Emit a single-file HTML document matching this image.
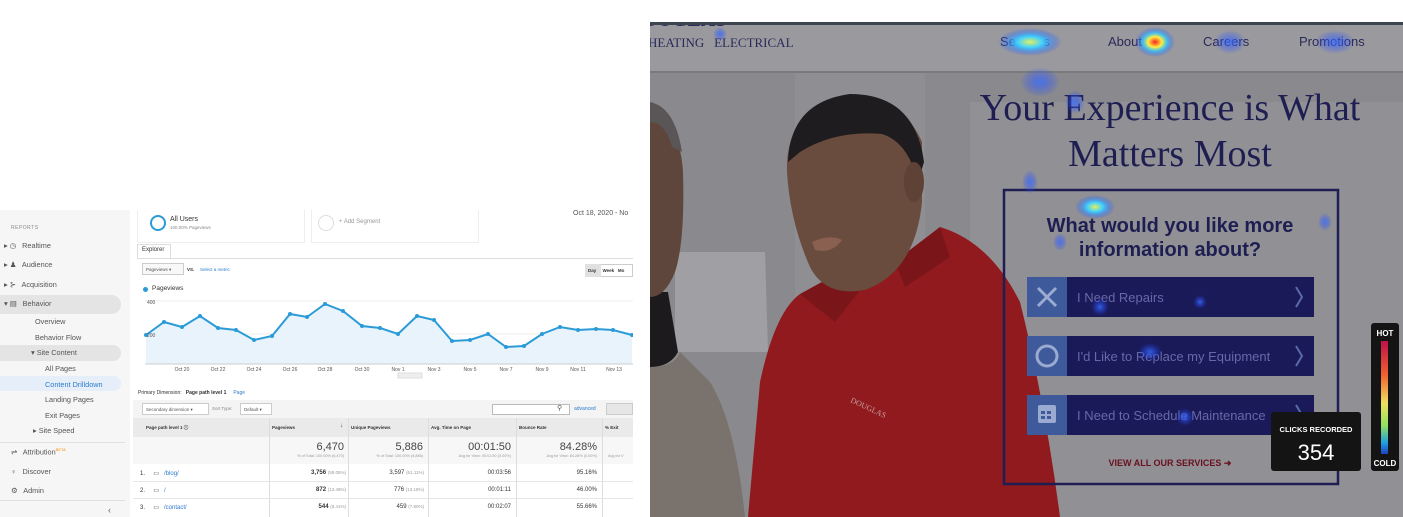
<!DOCTYPE html>
<html><head><meta charset="utf-8"><style>
*{margin:0;padding:0;box-sizing:border-box}
body{width:1403px;height:517px;background:#fff;position:relative;overflow:hidden;font-family:"Liberation Sans",sans-serif}
.a{position:absolute;white-space:nowrap}
.sb{position:absolute;left:0;top:210px;width:130px;height:307px;background:#f6f6f6}
.sb .i{position:absolute;left:30px;font-size:7.3px;color:#555}
.t{font-size:6px;color:#333}
.g{color:#999}
.l{color:#2b7bcc}
</style></head><body>
<div class="sb">
 <div class="a" style="left:11px;top:15px;font-size:5px;color:#888;letter-spacing:.5px">REPORTS</div>
 <div class="a" style="left:0;top:85px;width:121px;height:19px;background:#e4e4e4;border-radius:0 10px 10px 0"></div>
 <div class="a" style="left:0;top:135px;width:121px;height:16px;background:#e4e4e4;border-radius:0 8px 8px 0"></div>
 <div class="a" style="left:0;top:166px;width:121px;height:15px;background:#e6eef9;border-radius:0 8px 8px 0"></div>
 <div class="i a" style="left:4px;top:31px">▸ ◷&nbsp;&nbsp; Realtime</div>
 <div class="i a" style="left:4px;top:50px">▸ ♟&nbsp;&nbsp; Audience</div>
 <div class="i a" style="left:4px;top:70px">▸ ⊱&nbsp;&nbsp; Acquisition</div>
 <div class="i a" style="left:4px;top:89px">▾ ▤&nbsp;&nbsp; Behavior</div>
 <div class="i" style="left:35px;top:107px">Overview</div>
 <div class="i" style="left:35px;top:123px">Behavior Flow</div>
 <div class="i" style="left:31px;top:138px">▾ Site Content</div>
 <div class="i" style="left:45px;top:154px">All Pages</div>
 <div class="i" style="left:45px;top:170px;color:#2b7bcc">Content Drilldown</div>
 <div class="i" style="left:45px;top:185px">Landing Pages</div>
 <div class="i" style="left:45px;top:201px">Exit Pages</div>
 <div class="i" style="left:33px;top:216px">▸ Site Speed</div>
 <div class="a" style="left:0;top:232px;width:125px;border-top:1px solid #e0e0e0"></div>
 <div class="i a" style="left:11px;top:237px">⇌&nbsp;&nbsp; Attribution<sup style="color:#f80;font-size:4px">BETA</sup></div>
 <div class="i a" style="left:11px;top:257px">♀&nbsp;&nbsp; Discover</div>
 <div class="i a" style="left:11px;top:276px">⚙&nbsp;&nbsp; Admin</div>
 <div class="a" style="left:0;top:290px;width:125px;border-top:1px solid #e0e0e0"></div>
 <div class="a" style="left:108px;top:295px;font-size:9px;color:#666">‹</div>
</div>
<div class="a" style="left:137px;top:210px;width:168px;height:33px;border:1px solid #eee;border-top:none"></div>
<div class="a" style="left:150px;top:215px;width:16px;height:16px;border:2px solid #2b9bd8;border-radius:50%"></div>
<div class="a" style="left:170px;top:216px;font-size:7px;color:#333">All Users</div>
<div class="a" style="left:170px;top:225px;font-size:4.5px;color:#888">100.00% Pageviews</div>
<div class="a" style="left:311px;top:210px;width:168px;height:33px;border:1px solid #eee;border-top:none"></div>
<div class="a" style="left:318px;top:215px;width:16px;height:16px;border:1px solid #ddd;border-radius:50%"></div>
<div class="a" style="left:339px;top:219px;font-size:6px;color:#999">+ Add Segment</div>
<div class="a" style="left:573px;top:210px;font-size:7px;color:#555">Oct 18, 2020 - No</div>
<div class="a" style="left:137px;top:244px;width:34px;height:15px;border:1px solid #ddd;border-bottom:none;background:#fff"></div>
<div class="a" style="left:142px;top:247px;font-size:6px;color:#333">Explorer</div>
<div class="a" style="left:137px;top:258px;width:496px;border-top:1px solid #ddd"></div>
<div class="a" style="left:142px;top:263px;width:42px;height:12px;border:1px solid #ccc;background:#f8f8f8;font-size:4.5px;color:#555;padding:3px">Pageviews ▾</div>
<div class="a" style="left:187px;top:267px;font-size:4.5px;color:#333;font-weight:bold">VS.</div>
<div class="a l" style="left:200px;top:267px;font-size:4.5px">Select a metric</div>
<div class="a" style="left:585px;top:264px;width:48px;height:13px;border:1px solid #ccc;background:#fff"></div>
<div class="a" style="left:585px;top:264px;width:16px;height:13px;background:#e0e0e0"></div>
<div class="a" style="left:588px;top:268px;font-size:4.5px;color:#333;font-weight:bold">Day&nbsp;&nbsp;&nbsp;&nbsp; Week&nbsp;&nbsp; Mo</div>
<div class="a" style="left:143px;top:287px;width:5px;height:5px;border-radius:50%;background:#2b9bd8"></div>
<div class="a" style="left:152px;top:285px;font-size:6.5px;color:#333">Pageviews</div>
<svg class="a" style="left:137px;top:295px" width="496" height="85">
 <line x1="8" y1="6" x2="496" y2="6" stroke="#eee"/><line x1="8" y1="39" x2="496" y2="39" stroke="#eee"/>
 <polygon fill="#e8f3fb" points="9,40 27,27 45,32 63,21 81,33 99,35 117,45 135,41 153,19 170,22 188,9 206,16 225,31 243,33 261,39 280,21 297,25 315,46 333,45 351,39 369,52 387,51 405,39 423,32 441,35 459,34 476,35 495,40 495,69 9,69"/>
 <polyline fill="none" stroke="#2b9bd8" stroke-width="2" points="9,40 27,27 45,32 63,21 81,33 99,35 117,45 135,41 153,19 170,22 188,9 206,16 225,31 243,33 261,39 280,21 297,25 315,46 333,45 351,39 369,52 387,51 405,39 423,32 441,35 459,34 476,35 495,40"/>
 <g fill="#2b9bd8"><circle cx="9" cy="40" r="2"/><circle cx="27" cy="27" r="2"/><circle cx="45" cy="32" r="2"/><circle cx="63" cy="21" r="2"/><circle cx="81" cy="33" r="2"/><circle cx="99" cy="35" r="2"/><circle cx="117" cy="45" r="2"/><circle cx="135" cy="41" r="2"/><circle cx="153" cy="19" r="2"/><circle cx="170" cy="22" r="2"/><circle cx="188" cy="9" r="2"/><circle cx="206" cy="16" r="2"/><circle cx="225" cy="31" r="2"/><circle cx="243" cy="33" r="2"/><circle cx="261" cy="39" r="2"/><circle cx="280" cy="21" r="2"/><circle cx="297" cy="25" r="2"/><circle cx="315" cy="46" r="2"/><circle cx="333" cy="45" r="2"/><circle cx="351" cy="39" r="2"/><circle cx="369" cy="52" r="2"/><circle cx="387" cy="51" r="2"/><circle cx="405" cy="39" r="2"/><circle cx="423" cy="32" r="2"/><circle cx="441" cy="35" r="2"/><circle cx="459" cy="34" r="2"/><circle cx="476" cy="35" r="2"/><circle cx="495" cy="40" r="2"/></g>
 <line x1="8" y1="69" x2="496" y2="69" stroke="#ccc"/>
 <text x="10" y="9" font-size="5" fill="#555" font-family="Liberation Sans">400</text>
 <text x="10" y="42" font-size="5" fill="#555" font-family="Liberation Sans">200</text>
 <g font-size="5" fill="#555" font-family="Liberation Sans" text-anchor="middle"><text x="45" y="76">Oct 20</text><text x="81" y="76">Oct 22</text><text x="117" y="76">Oct 24</text><text x="153" y="76">Oct 26</text><text x="188" y="76">Oct 28</text><text x="225" y="76">Oct 30</text><text x="261" y="76">Nov 1</text><text x="297" y="76">Nov 3</text><text x="333" y="76">Nov 5</text><text x="369" y="76">Nov 7</text><text x="405" y="76">Nov 9</text><text x="441" y="76">Nov 11</text><text x="477" y="76">Nov 13</text></g>
 <rect x="261" y="78" width="24" height="5" fill="#eee" stroke="#ddd"/>
</svg>
<div class="a" style="left:138px;top:390px;font-size:5px;color:#333">Primary Dimension:&nbsp;&nbsp; <b>Page path level 1</b>&nbsp;&nbsp;&nbsp;&nbsp; <span class="l">Page</span></div>
<div class="a" style="left:133px;top:400px;width:500px;height:18px;background:#f4f4f4"></div>
<div class="a" style="left:142px;top:403px;width:67px;height:12px;border:1px solid #ccc;background:#fff;font-size:4.5px;color:#555;padding:3px">Secondary dimension ▾</div>
<div class="a" style="left:212px;top:406px;font-size:4.5px;color:#888">Sort Type:</div>
<div class="a" style="left:240px;top:403px;width:32px;height:12px;border:1px solid #ccc;background:#fff;font-size:4.5px;color:#555;padding:3px">Default ▾</div>
<div class="a" style="left:492px;top:404px;width:78px;height:11px;border:1px solid #bbb;background:#fff"></div>
<div class="a" style="left:557px;top:404px;font-size:7px;color:#555">⚲</div>
<div class="a l" style="left:574px;top:406px;font-size:5px">advanced</div>
<div class="a" style="left:606px;top:403px;width:27px;height:12px;border:1px solid #ccc;background:#e6e6e6"></div>
<div class="a" style="left:133px;top:418px;width:500px;height:19px;background:#eaeaea"></div>
<div class="a" style="left:133px;top:437px;width:500px;height:27px;background:#f7f7f7"></div>
<div class="a" style="left:269px;top:418px;height:99px;border-left:1px solid #ddd"></div>
<div class="a" style="left:348px;top:418px;height:99px;border-left:1px solid #ddd"></div>
<div class="a" style="left:428px;top:418px;height:99px;border-left:1px solid #ddd"></div>
<div class="a" style="left:516px;top:418px;height:99px;border-left:1px solid #ddd"></div>
<div class="a" style="left:602px;top:418px;height:99px;border-left:1px solid #ddd"></div>
<div class="a" style="left:133px;top:481px;width:500px;border-top:1px solid #e6e6e6"></div>
<div class="a" style="left:133px;top:498px;width:500px;border-top:1px solid #e6e6e6"></div>
<div class="a t" style="left:146px;top:425px;font-size:4.5px;font-weight:bold">Page path level 1 ⓘ</div>
<div class="a t" style="left:272px;top:425px;font-size:4.5px;font-weight:bold">Pageviews</div>
<div class="a t" style="left:340px;top:423px">↓</div>
<div class="a t" style="left:351px;top:425px;font-size:4.5px;font-weight:bold">Unique Pageviews</div>
<div class="a t" style="left:431px;top:425px;font-size:4.5px;font-weight:bold">Avg. Time on Page</div>
<div class="a t" style="left:519px;top:425px;font-size:4.5px;font-weight:bold">Bounce Rate</div>
<div class="a t" style="left:605px;top:425px;font-size:4.5px;font-weight:bold">% Exit</div>
<div class="a" style="left:269px;width:75px;top:441px;text-align:right;font-size:11px;color:#444">6,470</div>
<div class="a" style="left:348px;width:75px;top:441px;text-align:right;font-size:11px;color:#444">5,886</div>
<div class="a" style="left:428px;width:83px;top:441px;text-align:right;font-size:11px;color:#444">00:01:50</div>
<div class="a" style="left:516px;width:81px;top:441px;text-align:right;font-size:11px;color:#444">84.28%</div>
<div class="a g" style="left:269px;width:75px;top:454px;text-align:right;font-size:3.8px">% of Total: 100.00% (6,470)</div>
<div class="a g" style="left:348px;width:75px;top:454px;text-align:right;font-size:3.8px">% of Total: 100.00% (5,886)</div>
<div class="a g" style="left:428px;width:83px;top:454px;text-align:right;font-size:3.8px">Avg for View: 00:01:50 (0.00%)</div>
<div class="a g" style="left:516px;width:81px;top:454px;text-align:right;font-size:3.8px">Avg for View: 84.28% (0.00%)</div>
<div class="a g" style="left:608px;top:454px;font-size:3.8px">Avg for V</div>
<div class="a t" style="left:140px;top:470px">1.&nbsp;&nbsp;&nbsp;&nbsp; ▭&nbsp;&nbsp; <span class="l">/blog/</span></div>
<div class="a t" style="left:140px;top:487px">2.&nbsp;&nbsp;&nbsp;&nbsp; ▭&nbsp;&nbsp; <span class="l">/</span></div>
<div class="a t" style="left:140px;top:504px">3.&nbsp;&nbsp;&nbsp;&nbsp; ▭&nbsp;&nbsp; <span class="l">/contact/</span></div>
<div class="a t" style="left:269px;width:77px;text-align:right;top:470px"><b>3,756</b> <span class="g" style="font-size:4.5px">(58.05%)</span></div>
<div class="a t" style="left:269px;width:77px;text-align:right;top:487px"><b>872</b> <span class="g" style="font-size:4.5px">(13.48%)</span></div>
<div class="a t" style="left:269px;width:77px;text-align:right;top:504px"><b>544</b> <span class="g" style="font-size:4.5px">(8.41%)</span></div>
<div class="a t" style="left:348px;width:76px;text-align:right;top:470px">3,597 <span class="g" style="font-size:4.5px">(61.11%)</span></div>
<div class="a t" style="left:348px;width:76px;text-align:right;top:487px">776 <span class="g" style="font-size:4.5px">(13.18%)</span></div>
<div class="a t" style="left:348px;width:76px;text-align:right;top:504px">459 <span class="g" style="font-size:4.5px">(7.80%)</span></div>
<div class="a t" style="left:428px;width:83px;text-align:right;top:470px">00:03:56</div>
<div class="a t" style="left:428px;width:83px;text-align:right;top:487px">00:01:11</div>
<div class="a t" style="left:428px;width:83px;text-align:right;top:504px">00:02:07</div>
<div class="a t" style="left:516px;width:81px;text-align:right;top:470px">95.16%</div>
<div class="a t" style="left:516px;width:81px;text-align:right;top:487px">46.00%</div>
<div class="a t" style="left:516px;width:81px;text-align:right;top:504px">55.66%</div>

<svg class="a" style="left:650px;top:22px" width="753" height="495">
 <defs>
  <radialGradient id="h1"><stop offset="0" stop-color="#ff2020"/><stop offset=".35" stop-color="#ffee40"/><stop offset=".6" stop-color="#30c8ff" stop-opacity=".8"/><stop offset="1" stop-color="#2040ff" stop-opacity="0"/></radialGradient>
  <radialGradient id="h2"><stop offset="0" stop-color="#e0f060"/><stop offset=".4" stop-color="#40d0ff"/><stop offset="1" stop-color="#2040ff" stop-opacity="0"/></radialGradient>
  <radialGradient id="h3"><stop offset="0" stop-color="#3a70ff" stop-opacity=".8"/><stop offset="1" stop-color="#2040ff" stop-opacity="0"/></radialGradient>
  <linearGradient id="leg" x1="0" y1="0" x2="0" y2="1"><stop offset="0" stop-color="#c0104a"/><stop offset=".3" stop-color="#f06030"/><stop offset=".55" stop-color="#f0e060"/><stop offset=".75" stop-color="#90e060"/><stop offset=".9" stop-color="#20a0e0"/><stop offset="1" stop-color="#2040c0"/></linearGradient>
 </defs>
 <rect width="753" height="495" fill="#8a8a8e"/>
 <rect x="320" y="80" width="433" height="415" fill="#919195"/>
 <rect x="145" y="50" width="130" height="300" fill="#8f8f93"/>
 <rect x="25" y="480" width="60" height="15" fill="#e8e8ea" opacity=".4"/>
 <rect y="3" width="753" height="46" fill="#9a9a9e"/>
 <text x="-8" y="4" font-size="20" fill="#2a2a5a" font-family="Liberation Serif" font-weight="bold">OUGLAS</text>
 <rect width="753" height="3" fill="#3c4450"/>
 <rect y="49" width="753" height="2" fill="#7a7a7e"/>
 <path d="M25,230 L115,230 L118,330 L25,330Z" fill="#a0a0a4"/>
 <path d="M0,345 Q25,345 30,330 L60,360 Q85,400 95,495 L0,495Z" fill="#7a726c"/>
 <path d="M0,270 L18,270 L28,330 Q20,345 0,345Z" fill="#1c1a1c"/>
 <path d="M0,95 Q30,100 33,150 Q35,220 25,250 Q15,275 0,275Z" fill="#5e463c"/>
 <path d="M0,80 Q25,85 32,130 L22,125 Q15,100 0,100Z" fill="#5a5658"/>
 <path d="M98,495 L110,360 Q125,290 150,272 L215,262 L290,205 Q340,220 370,280 Q395,380 410,495Z" fill="#901a1e"/>
 <path d="M150,272 L190,250 L215,262 L185,300Z" fill="#7a161a"/>
 <path d="M290,205 L300,235 L255,265 L245,240Z" fill="#7a161a"/>
 <path d="M137,150 Q135,90 190,76 Q250,70 272,120 L272,180 Q265,250 215,268 Q175,275 160,245 Q140,200 137,150Z" fill="#6a4c3e"/>
 <path d="M138,140 Q140,80 200,72 Q265,72 274,140 L268,160 Q258,120 232,112 Q185,108 150,130Z" fill="#1e1c1e"/>
 <ellipse cx="264" cy="160" rx="10" ry="20" fill="#5e4236"/>
 <path d="M162,220 Q180,212 192,218 Q182,232 165,228Z" fill="#8a6050"/>
 <text x="200" y="380" font-size="8" fill="#c9a0a0" font-family="Liberation Serif" transform="rotate(25 200 380)">DOUGLAS</text>
 <text x="-2" y="25" font-size="13" fill="#2a2a5a" font-family="Liberation Serif">HEATING&#160;&#160; ELECTRICAL</text>
 <g font-size="13" fill="#2a2a5a" font-family="Liberation Sans"><text x="350" y="24">Services</text><text x="458" y="24">About</text><text x="553" y="24">Careers</text><text x="649" y="24">Promotions</text></g>
 <g font-family="Liberation Serif" fill="#1e1e52" font-size="38" text-anchor="middle"><text x="520" y="98">Your Experience is What</text><text x="520" y="144">Matters Most</text></g>
 <rect x="354" y="168" width="334" height="294" fill="none" stroke="#1e1e52" stroke-width="2.5"/>
 <g font-family="Liberation Sans" font-weight="bold" fill="#1e1e52" font-size="20" text-anchor="middle"><text x="520" y="210">What would you like more</text><text x="520" y="234">information about?</text></g>
 <g font-family="Liberation Sans" font-size="13" fill="#6868a8">
  <rect x="377" y="255" width="287" height="40" fill="#1a1a58"/><rect x="377" y="255" width="40" height="40" fill="#3f5a9a"/><text x="427" y="280">I Need Repairs</text>
  <rect x="377" y="314" width="287" height="40" fill="#1a1a58"/><rect x="377" y="314" width="40" height="40" fill="#3f5a9a"/><text x="427" y="339">I'd Like to Replace my Equipment</text>
  <rect x="377" y="373" width="287" height="40" fill="#1a1a58"/><rect x="377" y="373" width="40" height="40" fill="#3f5a9a"/><text x="427" y="398">I Need to Schedule Maintenance</text>
  <g fill="none" stroke="#5a6aa8" stroke-width="2"><path d="M646,265 L652,275 L646,285"/><path d="M646,324 L652,334 L646,344"/><path d="M646,383 L652,393 L646,403"/></g>
  <g stroke="#9aaad0" stroke-width="3" fill="none"><path d="M388,266 L406,284 M406,266 L388,284"/><circle cx="397" cy="334" r="10"/></g>
  <rect x="388" y="383" width="18" height="18" rx="2" fill="#9aaad0"/>
  <g fill="#3f5a9a"><rect x="391" y="389" width="4" height="3"/><rect x="397" y="389" width="4" height="3"/><rect x="391" y="394" width="4" height="3"/><rect x="397" y="394" width="4" height="3"/></g>
 </g>
 <text x="520" y="444" font-family="Liberation Sans" font-weight="bold" font-size="9" fill="#6a1020" text-anchor="middle">VIEW ALL OUR SERVICES ➜</text>
 <g>
  <ellipse cx="505" cy="20" rx="20" ry="15" fill="url(#h1)"/>
  <ellipse cx="380" cy="20" rx="32" ry="14" fill="url(#h2)"/>
  <ellipse cx="580" cy="20" rx="16" ry="12" fill="url(#h3)"/>
  <ellipse cx="685" cy="20" rx="20" ry="12" fill="url(#h3)"/>
  <ellipse cx="445" cy="185" rx="20" ry="12" fill="url(#h2)"/>
  <ellipse cx="390" cy="60" rx="20" ry="15" fill="url(#h3)"/>
  <ellipse cx="425" cy="80" rx="10" ry="12" fill="url(#h3)"/>
  <ellipse cx="380" cy="160" rx="8" ry="12" fill="url(#h3)"/>
  <ellipse cx="450" cy="285" rx="9" ry="9" fill="url(#h3)"/>
  <ellipse cx="550" cy="280" rx="7" ry="7" fill="url(#h3)"/>
  <ellipse cx="500" cy="330" rx="12" ry="9" fill="url(#h3)"/>
  <ellipse cx="535" cy="395" rx="9" ry="9" fill="url(#h3)"/>
  <ellipse cx="410" cy="220" rx="7" ry="9" fill="url(#h3)"/>
  <ellipse cx="675" cy="200" rx="7" ry="9" fill="url(#h3)"/>
  <ellipse cx="70" cy="12" rx="7" ry="7" fill="url(#h3)"/>
 </g>
 <rect x="621" y="390" width="90" height="59" rx="3" fill="#141414"/>
 <text x="666" y="410" font-family="Liberation Sans" font-weight="bold" font-size="7.5" fill="#fff" text-anchor="middle">CLICKS RECORDED</text>
 <text x="666" y="438" font-family="Liberation Sans" font-size="22" fill="#fff" text-anchor="middle">354</text>
 <rect x="721" y="301" width="28" height="148" rx="3" fill="#141414"/>
 <text x="735" y="314" font-family="Liberation Sans" font-weight="bold" font-size="8" fill="#fff" text-anchor="middle">HOT</text>
 <rect x="731" y="319" width="7" height="113" fill="url(#leg)"/>
 <text x="735" y="444" font-family="Liberation Sans" font-weight="bold" font-size="8" fill="#fff" text-anchor="middle">COLD</text>
</svg>
</body></html>
